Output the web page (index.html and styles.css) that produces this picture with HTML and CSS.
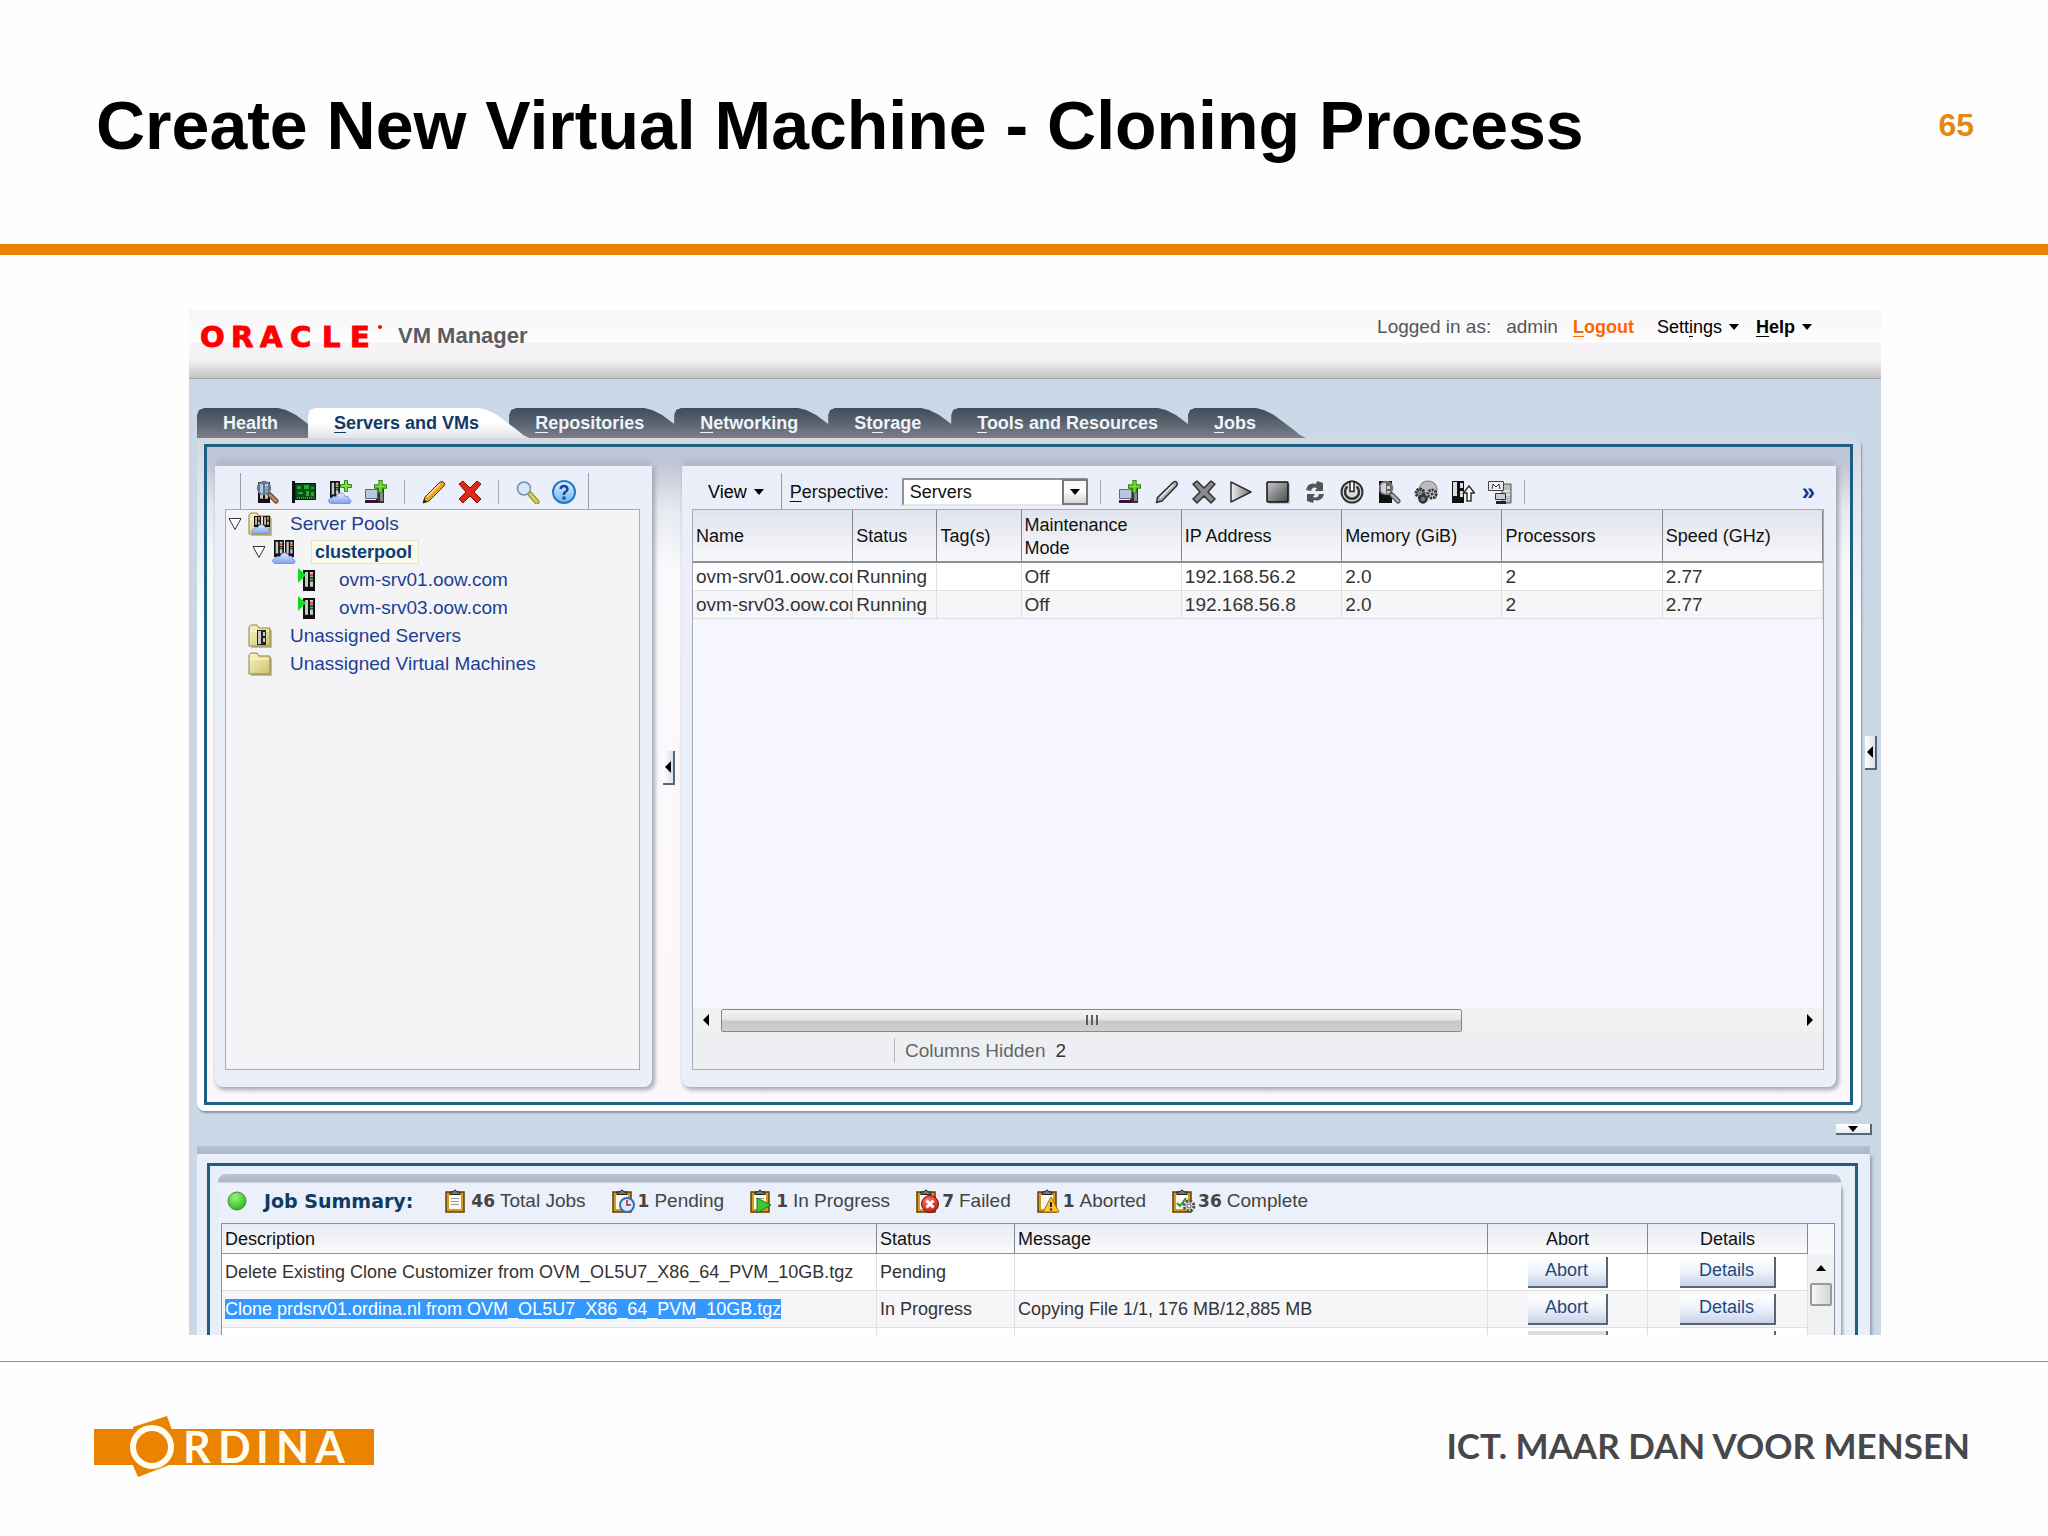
FILE: index.html
```html
<!DOCTYPE html>
<html lang="en">
<head>
<meta charset="utf-8">
<title>Create New Virtual Machine - Cloning Process</title>
<link rel="stylesheet" href="styles.css">
</head>
<body>
<svg class="defs" aria-hidden="true">
  <defs>
    <linearGradient id="gCloud" x1="0" y1="0" x2="0" y2="1"><stop offset="0" stop-color="#e6eeff"/><stop offset="1" stop-color="#7f9fea"/></linearGradient>
    <linearGradient id="gFolder" x1="0" y1="0" x2="1" y2="1"><stop offset="0" stop-color="#fbf6c8"/><stop offset="1" stop-color="#cfc26a"/></linearGradient>
    <linearGradient id="gGrey" x1="0" y1="0" x2="1" y2="1"><stop offset="0" stop-color="#c8c8c8"/><stop offset="1" stop-color="#4a4a4a"/></linearGradient>
    <linearGradient id="gPlay" x1="0" y1="0" x2="1" y2="0"><stop offset="0" stop-color="#eee"/><stop offset="1" stop-color="#777"/></linearGradient>
    <linearGradient id="gHelp" x1="0" y1="0" x2="0" y2="1"><stop offset="0" stop-color="#e4f4ff"/><stop offset="1" stop-color="#6bb4f0"/></linearGradient>
    <radialGradient id="gOk" cx=".4" cy=".3" r=".8"><stop offset="0" stop-color="#9cf57a"/><stop offset="1" stop-color="#1fae12"/></radialGradient>
    <radialGradient id="gErr" cx=".4" cy=".3" r=".8"><stop offset="0" stop-color="#ff7a66"/><stop offset="1" stop-color="#b80f0c"/></radialGradient>
  </defs>
  <symbol id="rack" viewBox="0 0 12 20" preserveAspectRatio="none"><path fill="#111" d="M0 0h12v20H0z"/><path fill="#c9c9c9" d="M2 2h3v14H2zM7 2h3v5H7zM7 11h3v5H7z"/><path fill="#e33" d="M7 4h3v2H7z"/><path fill="#2c4" d="M7 8h3v2H7z"/></symbol>
  <symbol id="cloud" viewBox="0 0 24 12" preserveAspectRatio="none"><path fill="url(#gCloud)" stroke="#7d97dd" d="M3 11.500C-.5 10.500 0 6 4 6 5 3.500 7 4.500 8 5c1-5 8-5.500 9-.5 3-1 4 1 3.500 2.500 3.500.5 3 4.500.5 4.500z"/></symbol>
  <symbol id="plus" viewBox="0 0 12 12"><path fill="#7fe03c" stroke="#2f8f14" d="M4.500.5h3v4h4v3h-4v4h-3v-4h-4v-3h4z"/></symbol>
  <symbol id="folder" viewBox="0 0 24 24"><path fill="#8d8442" opacity=".5" d="M3 6h21v18H3z"/><path fill="url(#gFolder)" stroke="#8f8536" d="M1 22V3l2-2h6l2 3h11v18z"/><path stroke="#fffde0" fill="none" d="M2 7h19"/></symbol>
  <symbol id="board" viewBox="0 0 24 24"><path fill="#111" d="M0 1h3v22H0z"/><path fill="#0a4f17" stroke="#111" d="M3 3.500h20.500v16H3z"/><path fill="#27a83a" d="M5 6h4v3H5zM12 5h5v4h-5zM19 7h3v2h-3zM6 12h5v2H6zM14 11h3v5h-3zM19 12h3v4h-3z"/><path stroke="#7c7" stroke-dasharray="1 1" d="M5 18h17"/></symbol>
  <symbol id="find-server" viewBox="0 0 24 24"><use href="#rack" x="2" y="2" width="12" height="21"/><circle cx="8" cy="8" r="6.500" fill="#9cc7ee" fill-opacity=".55" stroke="#6b7f99" stroke-width="1.500"/><path stroke="#5b3a22" stroke-width="5" stroke-linecap="round" d="M14 15l6 6"/><path stroke="#b98763" stroke-width="3" stroke-linecap="round" d="M14 15l6 6"/></symbol>
  <symbol id="find-server-grey" viewBox="0 0 24 24"><path fill="#111" d="M2 1h13v22H2z"/><path fill="#ccc" d="M4 3h5v11H4zM10 6h3v3h-3zM10 11h3v4h-3z"/><circle cx="9" cy="8" r="6.500" fill="#ddd" fill-opacity=".4" stroke="#777" stroke-width="1.500"/><path stroke="#444" stroke-width="5" stroke-linecap="round" d="M15 15l6 6"/><path stroke="#aaa" stroke-width="3" stroke-linecap="round" d="M15 15l6 6"/></symbol>
  <symbol id="pool-add" viewBox="0 0 24 24"><use href="#rack" x="2" y="1" width="10" height="17"/><use href="#cloud" x="0" y="12" width="24" height="12"/><use href="#plus" x="12" y="0" width="12" height="12"/></symbol>
  <symbol id="vm-add" viewBox="0 0 24 24"><path fill="#333" d="M12 5h8v18h-8z"/><path fill="#888" d="M16 12h3v9h-3z"/><path fill="#b9c6e2" stroke="#667" d="M1.500 9.500h12v9h-12z"/><path fill="#3a1038" d="M1 20h13v3H1z"/><use href="#plus" x="10" y="0" width="13" height="13"/></symbol>
  <symbol id="pencil" viewBox="0 0 24 24"><path fill="#e9a22c" stroke="#5e3a08" stroke-linejoin="round" d="M1 23l2-6L18 2q2-1 4 .5T22 6L7 21z"/><path stroke="#ffe09a" stroke-width="1.500" d="M5 17L18 4"/><path fill="#222" d="M1 23l1-4 3 3z"/></symbol>
  <symbol id="pencil-grey" viewBox="0 0 24 24"><path fill="#aaa" stroke="#333" stroke-width="1.500" stroke-linejoin="round" d="M1.500 22.500l1-5L18 2.500q2-1.500 3.500-.5t0 4L7 21z"/><path stroke="#eee" stroke-width="1.500" d="M5 18L18 5"/></symbol>
  <symbol id="cross" viewBox="0 0 24 24"><path fill="#e02a12" stroke="#7c0f04" stroke-linejoin="round" d="M1 4l4-3 7 7 7-7 4 3-7 8 7 7-4 4-7-7-7 7-4-4 7-7z"/></symbol>
  <symbol id="cross-grey" viewBox="0 0 24 24"><path fill="#8a8a8a" stroke="#333" stroke-width="1.500" stroke-linejoin="round" d="M1 4l4-3 7 7 7-7 4 3-7 8 7 7-4 4-7-7-7 7-4-4 7-7z"/></symbol>
  <symbol id="search" viewBox="0 0 24 24"><path stroke="#8d8a1c" stroke-width="5" stroke-linecap="round" d="M14 14l7 8"/><path stroke="#d6d24f" stroke-width="3" stroke-linecap="round" d="M14 14l7 8"/><circle cx="8" cy="8.500" r="6.500" fill="#d4e8f8" stroke="#7b8ea6" stroke-width="1.500"/></symbol>
  <symbol id="help" viewBox="0 0 24 24"><circle cx="12" cy="12" r="11" fill="url(#gHelp)" stroke="#2b76c4" stroke-width="2"/><path fill="none" stroke="#12489c" stroke-width="2.500" d="M8.500 9q.5-3 3.500-3t3.500 3q0 2-2 3T12 15"/><path fill="#12489c" d="M10.500 16.500h3v3h-3z"/></symbol>
  <symbol id="play" viewBox="0 0 24 24"><path fill="url(#gPlay)" stroke="#333" stroke-width="1.500" stroke-linejoin="round" d="M2 2l20 10L2 22z"/></symbol>
  <symbol id="stop" viewBox="0 0 24 24"><path fill="#999" opacity=".5" d="M3 4h21v20H3z"/><rect x="1" y="2" width="21" height="20" rx="1" fill="url(#gGrey)" stroke="#111" stroke-width="1.500"/></symbol>
  <symbol id="restart" viewBox="0 0 24 24"><path fill="#555" d="M3 10Q5 2 13 4l1-3 6 2v8h-8l2-3q-5-2-6 3zM21 14q-2 8-10 6l-1 3-6-2v-7h8l-2 3q5 2 6-3z"/></symbol>
  <symbol id="power" viewBox="0 0 24 24"><circle cx="12" cy="12" r="10.500" fill="#ddd" stroke="#333" stroke-width="2"/><path fill="none" stroke="#333" stroke-width="2.500" d="M7.500 6.500a7 7 0 1 0 9 0"/><path fill="#fff" stroke="#222" stroke-width="1.500" d="M10 1.500h4v10h-4z"/></symbol>
  <symbol id="gears" viewBox="0 0 24 24"><path fill="#bbb" stroke="#777" d="M5 10Q6 1 14 1t9 8l-1 9H9z"/><circle cx="6" cy="13" r="4" fill="#888" stroke="#333" stroke-width="3" stroke-dasharray="2 1"/><circle cx="9" cy="19" r="3.500" fill="#777" stroke="#333" stroke-width="2.500"/><circle cx="18" cy="14" r="4" fill="#ddd" stroke="#333" stroke-width="3" stroke-dasharray="2 1"/><circle cx="18" cy="14" r="1.500" fill="#333"/></symbol>
  <symbol id="move" viewBox="0 0 24 24"><path fill="#111" d="M1 1h12v22H1z"/><path fill="#ddd" d="M2 2h4v14H2zM9 3h3v5H9zM9 11h3v6H9z"/><path fill="#fff" stroke="#333" stroke-width="1.500" d="M18 6l5.500 7H20v8h-4v-8h-3.500z"/></symbol>
  <symbol id="message" viewBox="0 0 24 24"><path fill="#bbb" stroke="#555" d="M14 4h9v19h-9z"/><path stroke="#fff" d="M15 11h7M15 15h7"/><path fill="#eee" stroke="#444" d="M.5 1.500h15v9H.5z"/><path fill="none" stroke="#333" d="M4 9l1-5 3 3 3-3 1 5"/><path fill="#ccc" stroke="#333" d="M7.500 13.500h10v6h-10z"/><path fill="#222" d="M8 21h10v3H8z"/></symbol>
  <symbol id="pools" viewBox="0 0 24 24"><use href="#rack" x="2" y="0" width="10" height="17"/><use href="#rack" x="13" y="0" width="9" height="17"/><use href="#cloud" x="0" y="12" width="24" height="12"/></symbol>
  <symbol id="pool-folder" viewBox="0 0 24 24"><use href="#folder" width="24" height="24"/><use href="#rack" x="6" y="4" width="7" height="11"/><use href="#rack" x="15" y="4" width="7" height="11"/><use href="#cloud" x="3" y="12" width="20" height="10"/></symbol>
  <symbol id="server-folder" viewBox="0 0 24 24"><use href="#folder" width="24" height="24"/><path fill="#222" d="M9 6h9v15H9z"/><path fill="#ccc" d="M10 7h3v13h-3zM15 8h2v4h-2zM15 14h2v4h-2z"/></symbol>
  <symbol id="server-run" viewBox="0 0 24 24"><use href="#rack" x="6" y="2" width="12" height="21"/><path fill="#0be01a" d="M1 0l8 7-8 8z"/></symbol>
  <symbol id="clip" viewBox="0 0 24 24"><path fill="#d99a1c" stroke="#5f3f06" stroke-width="1.500" d="M1 3h18v20H1z"/><path fill="#fbfbf4" d="M4 6h12v14H4z"/><path fill="#777" stroke="#222" d="M5 5.500V3h3q2-4 4 0h3v2.500z"/></symbol>
  <symbol id="job-total" viewBox="0 0 24 24"><use href="#clip" width="24" height="24"/><path stroke="#999" d="M6 9.500h8M6 12.500h8M6 15.500h8"/></symbol>
  <symbol id="job-pending" viewBox="0 0 24 24"><use href="#clip" width="24" height="24"/><circle cx="15" cy="16" r="7" fill="#dcecff" stroke="#2e6cc4" stroke-width="2"/><path fill="none" stroke="#a22" stroke-width="1.500" d="M15 11v5h4"/></symbol>
  <symbol id="job-progress" viewBox="0 0 24 24"><use href="#clip" width="24" height="24"/><path stroke="#999" d="M6 9.500h8"/><path fill="#3fc43a" stroke="#157a16" stroke-linejoin="round" d="M7 9l14 7-14 8z"/></symbol>
  <symbol id="job-failed" viewBox="0 0 24 24"><use href="#clip" width="24" height="24"/><circle cx="14" cy="15" r="8.500" fill="url(#gErr)" stroke="#8a0a08"/><path stroke="#fff" stroke-width="3" d="M10.500 11.500l7 7M17.500 11.500l-7 7"/></symbol>
  <symbol id="job-aborted" viewBox="0 0 24 24"><use href="#clip" width="24" height="24"/><path fill="#ffc62b" stroke="#a36a00" stroke-linejoin="round" d="M14 8l8 15H6z"/><path stroke="#222" stroke-width="2" d="M14 13v5M14 19.500v2"/></symbol>
  <symbol id="job-complete" viewBox="0 0 24 24"><use href="#clip" width="24" height="24"/><path fill="none" stroke="#1f9a2c" stroke-width="2" d="M5 14l3 3 6-8"/><circle cx="17" cy="17" r="5" fill="#ddd" stroke="#555" stroke-width="3" stroke-dasharray="2.500 1.400"/><circle cx="17" cy="17" r="2" fill="#fff" stroke="#555"/></symbol>
  <symbol id="expanded" viewBox="0 0 14 14"><path fill="#fff" stroke="#333" d="M1 1.500h12l-6 11z"/></symbol>
  <symbol id="down" viewBox="0 0 10 6"><path d="M0 0h10L5 6z"/></symbol>
  <symbol id="left" viewBox="0 0 6 12"><path d="M6 0v12L0 6z"/></symbol>
  <symbol id="right" viewBox="0 0 6 12"><path d="M0 0v12l6-6z"/></symbol>
  <symbol id="up" viewBox="0 0 10 6"><path d="M0 6h10L5 0z"/></symbol>
</svg>

<header class="slide-head">
  <h1>Create New Virtual Machine - Cloning Process</h1>
  <span class="page-no">65</span>
</header>

<main class="app">
  <header class="app-head">
    <svg class="oracle" viewBox="0 0 184 32" role="img" aria-label="Oracle"><text x="1 32 61 91 123 151" y="24">ORACLE</text><circle cx="181" cy="4" r="2" fill="#f00"/></svg>
    <span class="product">VM Manager</span>
    <nav class="user-nav">
      <span>Logged in as:</span>
      <span>admin</span>
      <a class="logout" href="#"><u>L</u>ogout</a>
      <button class="menu"><span>Sett<u>i</u>ngs</span><svg class="caret"><use href="#down"/></svg></button>
      <button class="menu strong"><span><u>H</u>elp</span><svg class="caret"><use href="#down"/></svg></button>
    </nav>
  </header>

  <nav class="tabs">
    <button class="tab">He<u>a</u>lth</button>
    <button class="tab active"><u>S</u>ervers and VMs</button>
    <button class="tab"><u>R</u>epositories</button>
    <button class="tab"><u>N</u>etworking</button>
    <button class="tab">St<u>o</u>rage</button>
    <button class="tab"><u>T</u>ools and Resources</button>
    <button class="tab"><u>J</u>obs</button>
  </nav>

  <div class="workspace">
    <div class="frame">
      <div class="frame-line">
        <section class="panel tree-panel">
          <div class="toolbar tree-tools">
            <i class="rule tall"></i>
            <button class="tool" aria-label="Discover servers"><svg><use href="#find-server"/></svg></button>
            <button class="tool" aria-label="Networks"><svg><use href="#board"/></svg></button>
            <button class="tool" aria-label="Create server pool"><svg><use href="#pool-add"/></svg></button>
            <button class="tool" aria-label="Create virtual machine"><svg><use href="#vm-add"/></svg></button>
            <i class="rule"></i>
            <button class="tool" aria-label="Edit"><svg><use href="#pencil"/></svg></button>
            <button class="tool" aria-label="Delete"><svg><use href="#cross"/></svg></button>
            <i class="rule"></i>
            <button class="tool" aria-label="Find"><svg><use href="#search"/></svg></button>
            <button class="tool" aria-label="Help"><svg><use href="#help"/></svg></button>
            <i class="rule tall"></i>
          </div>
          <ul class="tree">
            <li class="l1"><svg class="twist"><use href="#expanded"/></svg><svg class="node"><use href="#pool-folder"/></svg><a href="#">Server Pools</a></li>
            <li class="l2"><svg class="twist"><use href="#expanded"/></svg><svg class="node"><use href="#pools"/></svg><a class="current" href="#">clusterpool</a></li>
            <li class="l3"><svg class="node"><use href="#server-run"/></svg><a href="#">ovm-srv01.oow.com</a></li>
            <li class="l3"><svg class="node"><use href="#server-run"/></svg><a href="#">ovm-srv03.oow.com</a></li>
            <li class="l1"><i class="twist"></i><svg class="node"><use href="#server-folder"/></svg><a href="#">Unassigned Servers</a></li>
            <li class="l1"><i class="twist"></i><svg class="node"><use href="#folder"/></svg><a href="#">Unassigned Virtual Machines</a></li>
          </ul>
        </section>

        <div class="splitter"><button class="handle" aria-label="Collapse tree"><svg><use href="#left"/></svg></button></div>

        <section class="panel list-panel">
          <div class="toolbar list-tools">
            <button class="menu view"><span>View</span><svg class="caret"><use href="#down"/></svg></button>
            <i class="rule tall"></i>
            <label for="perspective"><u>P</u>erspective:</label>
            <span class="select"><select id="perspective"><option>Servers</option></select><span class="select-arrow"><svg class="caret"><use href="#down"/></svg></span></span>
            <i class="rule"></i>
            <span class="tool-group">
              <button class="tool" aria-label="Create virtual machine"><svg><use href="#vm-add"/></svg></button>
              <button class="tool" aria-label="Edit server"><svg><use href="#pencil-grey"/></svg></button>
              <button class="tool" aria-label="Delete server"><svg><use href="#cross-grey"/></svg></button>
              <button class="tool" aria-label="Start"><svg><use href="#play"/></svg></button>
              <button class="tool" aria-label="Stop"><svg><use href="#stop"/></svg></button>
              <button class="tool" aria-label="Restart"><svg><use href="#restart"/></svg></button>
              <button class="tool" aria-label="Kill"><svg><use href="#power"/></svg></button>
              <button class="tool" aria-label="Rediscover"><svg><use href="#find-server-grey"/></svg></button>
              <button class="tool" aria-label="Rescan"><svg><use href="#gears"/></svg></button>
              <button class="tool" aria-label="Update"><svg><use href="#move"/></svg></button>
              <button class="tool" aria-label="Events"><svg><use href="#message"/></svg></button>
            </span>
            <i class="rule"></i>
            <button class="more">»</button>
          </div>
          <div class="grid">
            <table class="servers">
              <colgroup><col class="c-wide"><col class="c-slim"><col class="c-slim"><col class="c-wide"><col class="c-wide"><col class="c-wide"><col class="c-wide"><col class="c-wide"></colgroup>
              <thead><tr><th>Name</th><th>Status</th><th>Tag(s)</th><th>Maintenance<br>Mode</th><th>IP Address</th><th>Memory (GiB)</th><th>Processors</th><th>Speed (GHz)</th></tr></thead>
              <tbody>
                <tr><td>ovm-srv01.oow.com</td><td>Running</td><td></td><td>Off</td><td>192.168.56.2</td><td>2.0</td><td>2</td><td>2.77</td></tr>
                <tr><td>ovm-srv03.oow.com</td><td>Running</td><td></td><td>Off</td><td>192.168.56.8</td><td>2.0</td><td>2</td><td>2.77</td></tr>
              </tbody>
            </table>
            <div class="hscroll"><svg class="arrow"><use href="#left"/></svg><div class="track"><div class="thumb"><i></i><i></i><i></i></div></div><svg class="arrow"><use href="#right"/></svg></div>
            <div class="grid-foot"><span>Columns Hidden</span><b>2</b></div>
          </div>
        </section>
      </div>
    </div>
    <button class="handle side" aria-label="Expand side panel"><svg><use href="#left"/></svg></button>
  </div>

  <div class="divider"><button class="handle flat" aria-label="Collapse jobs"><svg><use href="#down"/></svg></button></div>

  <section class="jobs">
    <div class="jobs-line">
      <div class="jobs-panel">
        <div class="summary">
          <svg class="status" viewBox="0 0 20 20"><circle cx="10" cy="10" r="9" fill="url(#gOk)" stroke="#4a8a3a"/></svg>
          <h2>Job Summary:</h2>
          <span class="stat"><svg><use href="#job-total"/></svg><b>46</b>Total Jobs</span>
          <span class="stat"><svg><use href="#job-pending"/></svg><b>1</b>Pending</span>
          <span class="stat"><svg><use href="#job-progress"/></svg><b>1</b>In Progress</span>
          <span class="stat"><svg><use href="#job-failed"/></svg><b>7</b>Failed</span>
          <span class="stat"><svg><use href="#job-aborted"/></svg><b>1</b>Aborted</span>
          <span class="stat"><svg><use href="#job-complete"/></svg><b>36</b>Complete</span>
        </div>
        <div class="job-grid">
          <table class="job-table">
            <colgroup><col class="j-desc"><col class="j-status"><col><col class="j-act"><col class="j-act"></colgroup>
            <thead><tr><th>Description</th><th>Status</th><th>Message</th><th class="mid">Abort</th><th class="mid">Details</th></tr></thead>
            <tbody>
              <tr><td>Delete Existing Clone Customizer from OVM_OL5U7_X86_64_PVM_10GB.tgz</td><td>Pending</td><td></td><td class="mid"><button class="btn">Abort</button></td><td class="mid"><button class="btn wide">Details</button></td></tr>
              <tr><td><mark>Clone prdsrv01.ordina.nl from OVM_OL5U7_X86_64_PVM_10GB.tgz</mark></td><td>In Progress</td><td>Copying File 1/1, 176 MB/12,885 MB</td><td class="mid"><button class="btn">Abort</button></td><td class="mid"><button class="btn wide">Details</button></td></tr>
              <tr><td></td><td></td><td></td><td class="mid"><button class="btn off" aria-label="Abort"></button></td><td class="mid"><button class="btn wide" aria-label="Details"></button></td></tr>
            </tbody>
          </table>
          <div class="vscroll"><svg><use href="#up"/></svg><div class="vthumb"></div></div>
        </div>
      </div>
    </div>
  </section>
</main>

<footer class="slide-foot">
  <svg class="ordina" viewBox="0 0 280 62" role="img" aria-label="Ordina">
    <path fill="#e98300" d="M0 13h280v36H0z"/><path fill="#e98300" d="M39 11L73 0l5 14v34l-34 13-6-14z"/>
    <circle cx="58" cy="31" r="19" fill="none" stroke="#fffdf0" stroke-width="6"/>
    <text x="89 124 162 182 221" y="47">RDINA</text>
  </svg>
  <p>ICT. MAAR DAN VOOR MENSEN</p>
</footer>
</body>
</html>
```
FILE: styles.css
```css
* { box-sizing: border-box; }

body {
  margin: 0;
  min-height: 100vh;
  display: flex;
  flex-direction: column;
  background: #fefefe;
  color: #333;
  font: 18px/22px "Liberation Sans", Arial, sans-serif;
}

button {
  padding: 0;
  border: 0;
  background: none;
  color: inherit;
  font: inherit;
}

a { color: inherit; text-decoration: none; }

u { text-decoration: underline; text-underline-offset: 3px; text-decoration-thickness: 1px; }

.defs { position: absolute; width: 0; height: 0; }

/* Slide chrome */
.slide-head {
  display: flex;
  align-items: center;
  justify-content: space-between;
  height: 255px;
  padding: 5px 74px 0 96px;
  border-bottom: 11px solid #e98300;
}

.slide-head h1 {
  margin: 0;
  color: #000;
  font-size: 68px;
  line-height: 80px;
}

.page-no {
  color: #e08a14;
  font-size: 32px;
  font-weight: bold;
}

.slide-foot {
  display: flex;
  align-items: center;
  justify-content: space-between;
  height: 175px;
  margin-top: 26px;
  padding: 0 78px 4px 94px;
  border-top: 1px solid #8c8c8c;
}

.slide-foot p {
  margin: 0;
  padding-bottom: 5px;
  color: #48484b;
  font: bold 35px/42px Lato, sans-serif;
}

.ordina { width: 280px; height: 62px; }
.ordina text { fill: #fffdf0; font: bold 43px Lato, sans-serif; }

/* Application */
.app {
  flex: 1;
  display: flex;
  flex-direction: column;
  margin: 55px 167px 0 189px;
  background: #cbd8e8;
}

.app-head {
  display: flex;
  height: 69px;
  padding: 0 69px 0 10px;
  border-bottom: 1px solid #a3a6ac;
  background: linear-gradient(#f6f4f7, #fefefe 32px, #f5f3f6 33px, #f3f2f3 50px, #c5c3c4);
}

.oracle { width: 184px; height: 32px; margin-top: 13px; overflow: visible; }
.oracle text {
  fill: #f00;
  stroke: #f00;
  stroke-width: 1px;
  font: bold 29px "DejaVu Sans", sans-serif;
}

.product {
  margin: 13px 0 0 15px;
  color: #5c5c60;
  font-size: 22px;
  font-weight: bold;
  line-height: 26px;
}

.user-nav {
  display: flex;
  gap: 15px;
  margin: 6px 0 0 auto;
  color: #555;
  font-size: 19px;
}

.user-nav > * { height: 22px; }
.logout { color: #f60; font-size: 18px; font-weight: bold; }
.user-nav .menu { margin-left: 8px; font-size: 18px; }
.user-nav .strong { margin-left: 2px; }

.menu { display: flex; align-items: center; gap: 7px; color: #000; }
.menu.strong { font-weight: bold; }
.caret { width: 10px; height: 6px; }

.tabs {
  display: flex;
  height: 59px;
  padding: 29px 8px 0;
}

.tab {
  height: 30px;
  margin-right: -20px;
  padding: 0 50px 0 26px;
  background: linear-gradient(#3e4d5d, #5a6370 50%, #7c7f8a);
  color: #eef4fa;
  font-weight: bold;
  white-space: nowrap;
  clip-path: polygon(0 7px, 2px 2px, 7px 0, calc(100% - 50px) 0, calc(100% - 42px) 2px, calc(100% - 32px) 7px, calc(100% - 12px) 22px, calc(100% - 6px) 27px, 100% 100%, 0 100%);
}

.tab.active {
  z-index: 1;
  background: linear-gradient(#fff 50%, #dfe4ec);
  color: #0f3a66;
}

.workspace {
  flex: 1;
  display: grid;
  grid-template-columns: 1fr 20px;
  padding-left: 8px;
}

.frame {
  display: flex;
  min-width: 0;
  padding: 6px 8px 6px 7px;
  border-radius: 0 8px 8px 8px;
  background: linear-gradient(#d3d8e0, #e3e6ef 60px, #fff 200px);
  box-shadow: 1px 2px 2px #8a93a3;
}

.frame-line {
  flex: 1;
  display: flex;
  min-width: 0;
  padding: 19px 14px 15px 8px;
  border: 3px solid #1f5f82;
  background: linear-gradient(#bcc8d8, #bfc4d4 14px, #e6e8f0 60px, #fafafd 120px, #fdf6fa);
}

.panel {
  display: flex;
  flex-direction: column;
  border-radius: 0 0 8px 8px;
  background: #ebeffa;
  box-shadow: 0 -8px 3px -2px #b3b8cb, 2px 2px 4px 1px #a5a7b5;
}

.tree-panel { flex: none; width: 437px; padding: 0 12px 17px 10px; }
.list-panel { flex: 1; min-width: 0; padding: 0 12px 17px 10px; }

.toolbar { display: flex; align-items: center; height: 43px; padding-top: 8px; }
.tree-tools { gap: 12px; padding-left: 15px; }
.tree-tools .rule { margin: 0 5px 0 4px; }
.tree-tools .rule.tall { margin: 0 3px 0 0; }

.rule { width: 1px; height: 24px; background: #a6acba; }
.rule.tall { align-self: flex-end; height: 36px; margin-top: -1px; background: #989eae; }

.tool { display: block; width: 24px; height: 24px; }
.tool svg { display: block; width: 24px; height: 24px; }

.tree {
  flex: 1;
  margin: 0;
  padding: 0;
  border: 1px solid #a8abb5;
  background: #f4f4f7;
  list-style: none;
}

.tree li { display: flex; align-items: center; height: 28px; color: #1c3f94; font-size: 19px; }
.tree .l1 { padding-left: 2px; }
.tree .l2 { padding-left: 26px; }
.tree .l3 { padding-left: 71px; }
.twist { width: 14px; height: 14px; margin-right: 6px; }
.node { width: 24px; height: 24px; margin-right: 18px; }
.tree .current {
  margin-left: -3px;
  padding: 0 6px 0 3px;
  border: 1px solid #e6e3cf;
  background: #fcfbea;
  color: #0c3d7c;
  font-size: 18px;
  font-weight: bold;
}

.splitter { flex: none; display: grid; place-items: center; width: 34px; margin-right: -4px; }
.handle {
  display: grid;
  place-items: center;
  width: 12px;
  height: 34px;
  border: solid #5c6473;
  border-width: 0 2px 2px 0;
  background: linear-gradient(90deg, #fff, #d9e2f0);
}
.handle svg { width: 6px; height: 12px; }
.side { align-self: center; justify-self: center; margin-bottom: 44px; }
.splitter .handle { margin-bottom: 18px; }

.list-tools { color: #111; }
.view { margin: 0 17px 0 16px; }
.list-tools label { margin: 0 13px 0 8px; }
.list-tools > .rule:not(.tall) { margin: 0 17px 0 12px; }

.select { position: relative; width: 186px; height: 28px; }
.select select {
  width: 100%;
  height: 100%;
  padding: 0 6px;
  appearance: none;
  border: 2px solid;
  border-color: #8f939b #e4e6ea #e4e6ea #8f939b;
  border-radius: 0;
  background: #fff;
  color: #111;
  font: inherit;
}
.select-arrow {
  position: absolute;
  top: 1px;
  right: 0;
  display: grid;
  place-items: center;
  width: 26px;
  height: 26px;
  border: 2px solid #77797e;
  background: linear-gradient(#fafafa 50%, #d5d5d8);
  pointer-events: none;
}

.tool-group { display: flex; gap: 13px; }
.list-tools > .rule:nth-last-child(2) { margin-left: 12px; }
.more { margin: 0 9px 0 auto; color: #123a94; font-size: 24px; line-height: 20px; font-weight: bold; }

.grid {
  flex: 1;
  display: flex;
  flex-direction: column;
  border: 1px solid #a8abb5;
  background: #f5f6fe;
}

table { width: 100%; border-collapse: separate; border-spacing: 0; table-layout: fixed; }

th, td { padding: 0 0 0 3px; overflow: hidden; text-align: left; white-space: nowrap; }

th {
  border-right: 1px solid #84878f;
  border-bottom: 2px solid #8d9096;
  background: linear-gradient(#e1e4ed, #f8f8fb);
  color: #111;
  font-weight: normal;
}

td { border-right: 1px solid #dfe0e6; border-bottom: 1px solid #dfe0e6; background: #fff; }
tr:nth-child(even) td { background: #f6f6f8; }

.servers { margin-bottom: auto; }
.servers th { height: 53px; padding-top: 2px; line-height: 23px; }
.servers td { height: 28px; font-size: 19px; }
.c-wide { width: 160px; }
.c-slim { width: 84px; }

.hscroll { display: flex; align-items: center; height: 24px; padding: 0 10px; background: #f0f1f1; }
.hscroll .arrow { width: 6px; height: 12px; }
.track { flex: 1; margin: 0 12px; }
.thumb {
  display: flex;
  align-items: center;
  justify-content: center;
  gap: 3px;
  width: 69%;
  height: 23px;
  border: 1px solid #85878a;
  border-radius: 2px;
  background: linear-gradient(#f2f3f3, #e6e7e7 45%, #c6c8c8 55%, #d0d1d1);
}
.thumb i { width: 2px; height: 10px; background: #5b5d60; }

.grid-foot {
  display: flex;
  align-items: center;
  height: 37px;
  padding-left: 201px;
  background: #eeeff2;
  color: #666;
  font-size: 19px;
}
.grid-foot span { padding-left: 10px; border-left: 1px solid #b5b5c6; line-height: 25px; }
.grid-foot b { margin-left: 10px; color: #333; font-weight: normal; }

.divider { height: 35px; padding: 13px 9px 0 0; }
.handle.flat {
  width: 36px;
  height: 11px;
  margin-left: auto;
  background: linear-gradient(#fff, #e6ecf6);
}
.handle.flat svg { width: 12px; height: 6px; }

/* Job pane: shows the first rows only */
.jobs {
  height: 189px;
  margin: 0 11px 0 8px;
  padding: 17px 12px 0 10px;
  overflow: hidden;
  background: linear-gradient(#b4c1d3, #a9b8cc 8px, #e8eff9 8px);
  box-shadow: 2px 10px 3px #929dae;
  clip-path: inset(0 -11px 0 0);
}
.jobs-line {
  height: 172px;
  padding: 8px 14px 0 8px;
  border: solid #1f5f82;
  border-width: 3px 3px 0;
  background: #e8eff8;
}
.jobs-panel {
  height: 161px;
  padding: 9px 6px 0 3px;
  overflow: hidden;
  border-radius: 8px 8px 0 0;
  background: linear-gradient(#bcc5d3, #abb6c6 8px, #ebf0fb 9px);
  box-shadow: 2px 10px 3px #9ca5b5;
}

.summary { display: flex; align-items: center; height: 40px; padding: 0 0 4px 6px; color: #444; }
.status { width: 20px; height: 20px; }
.summary h2 {
  margin: 0 32px 0 17px;
  color: #0d3b61;
  font: bold 19px/24px "DejaVu Sans", sans-serif;
}
.stat { display: flex; align-items: center; margin-right: 26px; font-size: 19px; }
.stat svg { width: 24px; height: 24px; }
.stat b { margin: 0 5px 0 2px; font: bold 17px/22px "DejaVu Sans", sans-serif; }

.job-grid {
  display: grid;
  grid-template-columns: 1fr 26px;
  border: solid #8d9096;
  border-width: 1px 1px 0;
}
.job-table th { height: 30px; border-bottom-width: 1px; }
.job-table td { height: 37px; font-size: 18px; }
.job-table .mid { padding: 0; text-align: center; }
.job-table th { background: linear-gradient(#e9ebf1, #fafafc); }
.j-desc { width: 655px; }
.j-status { width: 138px; }
.j-act { width: 160px; }

mark { background: #39f; color: #fff; }

.btn {
  display: block;
  width: 80px;
  height: 31px;
  margin: 0 auto;
  padding-bottom: 2px;
  border: solid #5a6477;
  border-width: 0 2px 2px 0;
  background: linear-gradient(#fff, #eef2fa 50%, #c6d3e8);
  color: #1d4a7c;
  font-size: 18px;
}
.btn.wide { width: 96px; }
.btn.off { background: #dcdce6; }

.vscroll {
  display: flex;
  flex-direction: column;
  align-items: center;
  gap: 12px;
  padding-top: 41px;
  background: linear-gradient(#f8f9fd 30px, #f0f1f2 30px);
}
.vscroll svg { width: 10px; height: 6px; }
.vthumb {
  width: 22px;
  height: 23px;
  border: 2px solid #98999c;
  border-radius: 2px;
  background: linear-gradient(90deg, #f5f5f5, #d4d5d6);
}
```
